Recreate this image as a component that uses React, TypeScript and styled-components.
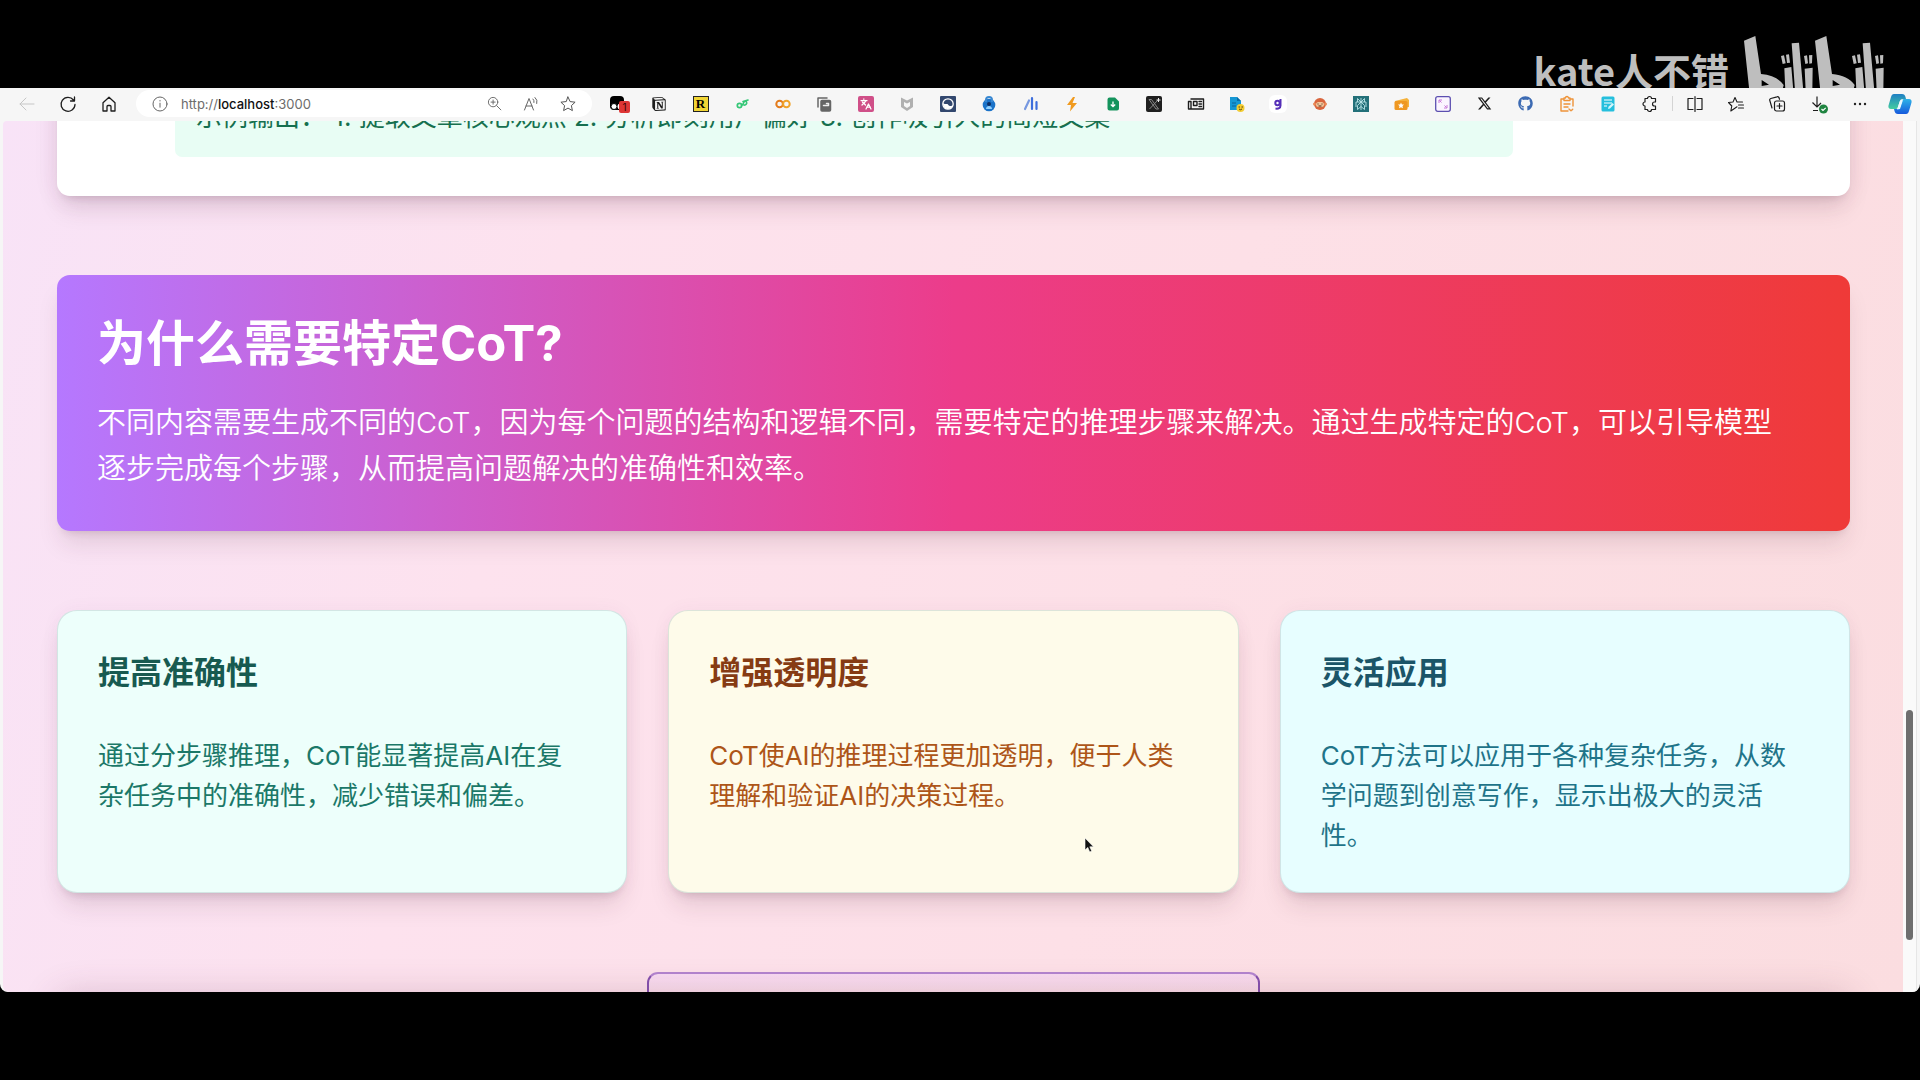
import React from "react";
import styled, { createGlobalStyle } from "styled-components";
import { Languages } from "lucide-react";
import { FaGithub, FaXTwitter } from "react-icons/fa6";
import { SiNotion } from "react-icons/si";

const sans = `Inter, "Noto Sans CJK SC", "Noto Sans", sans-serif`;

const GlobalStyle = createGlobalStyle`
  * { box-sizing: border-box; }
  body { margin: 0; background: #000; font-family: ${sans}; }
  h2, h3, p { margin: 0; }
  button { border: 0; padding: 0; background: none; font: inherit; color: inherit; cursor: pointer; }
`;

const Frame = styled.div`
  display: grid;
  grid-template-rows: 88px minmax(0, 1fr) 88px;
  height: 100vh;
  background: #000;
  overflow: hidden;
`;

const Letterbox = styled.header`
  display: flex;
  justify-content: flex-end;
  align-items: flex-start;
  gap: 15px;
  padding: 36px 36px 0 0;
  color: #bebebe;
  overflow: hidden;
`;

const Uploader = styled.span`
  font: 700 38px/56px "Noto Sans CJK SC", sans-serif;
  margin-top: 6px;
`;

const Browser = styled.div`
  display: flex;
  flex-direction: column;
  min-height: 0;
  background: #f6f6f6;
  border-radius: 0 0 8px 8px;
  overflow: hidden;
`;

const Toolbar = styled.nav`
  display: flex;
  align-items: center;
  flex: none;
  height: 33px;
  padding: 0 8px 2px 19px;
  color: #1d1d1d;
`;

const NavGroup = styled.div`
  display: flex;
  gap: 25px;
  margin-right: 19px;
`;

const IconButton = styled.button<{ $tone?: string }>`
  position: relative;
  display: grid;
  place-items: center;
  width: 16px;
  height: 16px;
  color: ${(p) => p.$tone ?? "#1d1d1d"};
  svg { display: block; overflow: visible; }
`;

const AddressBar = styled.div`
  display: flex;
  align-items: center;
  flex: 0 1 456px;
  height: 27px;
  padding: 0 16px;
  border-radius: 14px;
  background: #fff;
`;

const AddressText = styled.button`
  flex: 1;
  margin-left: 13px;
  text-align: left;
  font-size: 13px;
  line-height: 20px;
  color: #6c6c6c;
  strong { font-weight: 500; color: #111; }
`;

const AddressActions = styled.div`
  display: flex;
  gap: 21px;
`;

const Extensions = styled.div`
  display: flex;
  flex: 1;
  justify-content: space-between;
  margin: 0 14px 0 18px;
`;

const Divider = styled.span`
  width: 1px;
  height: 15px;
  margin-right: 14px;
  background: #d4d4d4;
`;

const MenuGroup = styled.div`
  display: flex;
  gap: 25px;
  margin-right: 21px;
`;

const CopilotButton = styled(IconButton)`
  width: 24px;
  height: 24px;
`;

const Badge = styled.span`
  position: absolute;
  left: 9px;
  top: 5px;
  width: 11px;
  height: 12px;
  border-radius: 2px;
  background: #dd3535;
  color: #3a0505;
  font-size: 10px;
  line-height: 12px;
  text-align: center;
`;

const LetterTile = styled.span`
  width: 16px;
  height: 16px;
  border: 1px solid #222;
  background: #f1d535;
  color: #000;
  font: 700 13px/14px "Liberation Serif", serif;
  text-align: center;
`;

const Viewport = styled.div`
  display: flex;
  flex: 1;
  min-height: 0;
  padding: 0 3px;
`;

const Page = styled.main`
  flex: 1;
  min-width: 0;
  overflow: hidden;
  border-radius: 4px 0 0 6px;
  padding: 0 53px 0 54px;
  background: linear-gradient(105deg, #f8e3f7 0%, #fde2ee 28%, #fde0e7 60%, #fbdde0 100%);
`;

const Content = styled.div`
  display: flex;
  flex-direction: column;
  gap: 79px;
  margin-top: -84px;
`;

const lift = `0 17px 25px -5px rgba(70, 30, 50, 0.13), 0 7px 10px -7px rgba(70, 30, 50, 0.2)`;

const ExampleCard = styled.section`
  padding: 39px 118px;
  border-radius: 13px;
  background: #fff;
  box-shadow: 0 0 25px rgba(120, 50, 110, 0.1), ${lift};
`;

const ExampleOutput = styled.p`
  width: calc(100% - 219px);
  padding: 21px;
  border-radius: 7px;
  background: #e8fdf4;
  color: #16704f;
  font-size: 26px;
  line-height: 39px;
`;

const Hero = styled.section`
  padding: 41px 40px 39px;
  border-radius: 13px;
  background: linear-gradient(to right, #b578ff 0%, #ec3c8a 50%, #ef3a38 100%);
  box-shadow: ${lift};
  color: #fff;
`;

const HeroTitle = styled.h2`
  font-size: 49px;
  font-weight: 700;
  line-height: 56px;
`;

const HeroText = styled.p`
  margin-top: 28px;
  padding-right: 12px;
  font-size: 29px;
  font-weight: 350;
  line-height: 46px;
`;

const CardGrid = styled.div`
  display: grid;
  grid-template-columns: repeat(3, minmax(0, 1fr));
  gap: 41px;
`;

const Card = styled.article<{ $bg: string }>`
  padding: 42px 40px 36px;
  border: 1px solid rgba(180, 200, 200, 0.45);
  border-radius: 20px;
  background: ${(p) => p.$bg};
  box-shadow: 0 0 18px rgba(120, 50, 110, 0.05), ${lift};
`;

const CardTitle = styled.h3<{ $color: string }>`
  color: ${(p) => p.$color};
  font-size: 32px;
  font-weight: 700;
  line-height: 40px;
`;

const CardText = styled.p<{ $color: string }>`
  margin-top: 43px;
  color: ${(p) => p.$color};
  font-size: 26px;
  line-height: 40px;
`;

const Next = styled.section`
  display: flex;
  flex-direction: column;
  align-items: center;
`;

const NextHeading = styled.div`
  width: 613px;
  height: 24px;
  border: 2px solid #8450ae;
  border-top-color: #b384cf;
  border-bottom: 0;
  border-radius: 11px 11px 0 0;
  background: linear-gradient(rgba(245, 214, 248, 0.6), rgba(240, 210, 225, 0.1));
`;

const NextPanel = styled.div`
  align-self: stretch;
  height: 160px;
  border-radius: 13px;
  background: #fff;
  box-shadow: 0 0 36px rgba(110, 50, 80, 0.24);
`;

const ScrollTrack = styled.div`
  display: grid;
  grid-template-rows: 589fr 230fr 52fr;
  flex: none;
  width: 14px;
  padding: 0 3px;
  background: #fafafa;
  border-right: 1px solid #e6e6e6;
  &::before { content: ""; }
`;

const ScrollThumb = styled.div`
  border-radius: 4px;
  background: #6e6e6e;
`;

const Pointer = styled.svg`
  position: fixed;
  left: 1084px;
  top: 837px;
`;

type IconProps = { children: React.ReactNode; size?: number; w?: number };

const Line = ({ children, size = 16, w = 1 }: IconProps) => (
  <svg width={size} height={size} viewBox="0 0 16 16" fill="none" stroke="currentColor" strokeWidth={w} strokeLinecap="round" strokeLinejoin="round" aria-hidden="true">
    {children}
  </svg>
);

const Art = ({ children, size = 16 }: IconProps) => (
  <svg width={size} height={size} viewBox="0 0 16 16" fill="none" aria-hidden="true">
    {children}
  </svg>
);

const BiliHalf = () => (
  <>
    <path fillRule="evenodd" d="M0 14 34 0l17 114c32 3 55 14 68 33l-4 17H16zM53 132v18l22-4z" />
    <path d="m111 60 9-2 5 24-9 2zM126 56l9-1 3 25-9 1zM121 97l21-4 6 71h-24zM143 22l22-2 13 144h-25zM180 60l9-2 3 24-8 2zM195 58l10-1-1 25-8 1zM182 98l24-3-1 69h-20z" />
  </>
);

const BiliLogo = () => (
  <svg width="140" height="55" viewBox="0 0 420 165" fill="currentColor" role="img" aria-label="bilibili">
    <BiliHalf />
    <g transform="translate(213 0)"><BiliHalf /></g>
  </svg>
);

const extensions: { name: string; tone?: string; icon: React.ReactNode }[] = [
  {
    name: "Script manager",
    icon: (
      <>
        <Art>
          <path d="M0 4a4 4 0 0 1 4-4h6a4 4 0 0 1 4 4v8a2 2 0 0 1-2 2H4a4 4 0 0 1-4-4z" fill="#000" />
          <circle cx="4" cy="10.500" r="3" fill="#fff" stroke="#000" />
          <circle cx="10.500" cy="10.500" r="3" fill="#fff" />
        </Art>
        <Badge>1</Badge>
      </>
    ),
  },
  {
    name: "Notion clipper",
    icon: <SiNotion size={14} />,
  },
  { name: "Reader", icon: <LetterTile>R</LetterTile> },
  {
    name: "Link tool",
    tone: "#35c777",
    icon: <Line w={1.7}><circle cx="5.500" cy="9.500" r="2.200" /><path d="M7.500 9.500c2 0 1.500-4 4-4.500M10 9a2.200 2.200 0 0 0 2.500-3M9 5.500 14 4" /></Line>,
  },
  {
    name: "Colab",
    icon: <Art><circle cx="4.600" cy="8" r="3.300" stroke="#e37b1b" strokeWidth="2" /><circle cx="11.400" cy="8" r="3.300" stroke="#f0a32a" strokeWidth="2" /></Art>,
  },
  {
    name: "Tab copy",
    tone: "#666",
    icon: <Line w={1.5}><path d="M2 11V2h9" /><rect x="5" y="4.500" width="9.500" height="10.500" rx="1" fill="#666" /><path d="M7.500 9.500h5v-2h-2" stroke="#eee" /></Line>,
  },
  {
    name: "Translate",
    tone: "#fff",
    icon: <Art><rect width="16" height="16" rx="2" fill="#d04f88" /><Languages x={2} y={2} width={12} height={12} strokeWidth={2.5} /></Art>,
  },
  {
    name: "Web advisor",
    icon: <Art><path d="M2 1.500 8 4.500l6-3v9.500L8 15l-6-4zM5 6v4l3 2 3-2V6L8 7.500z" fill="#b0b0b0" fillRule="evenodd" /></Art>,
  },
  {
    name: "Wave",
    icon: <Art><rect width="16" height="16" rx="1" fill="#32476e" /><circle cx="8" cy="8" r="5.200" stroke="#fff" strokeWidth="1.300" /><path d="M3 7c2 2 4 0 5 1.500S11.500 11 13 9c-.5 3-3 4-5 4S3 11 3 7z" fill="#fff" /></Art>,
  },
  {
    name: "Password vault",
    icon: <Art><circle cx="8" cy="9" r="6.300" fill="#1b73c9" /><path d="M5 6V4a3 3 0 0 1 6 0v2" stroke="#3988d2" strokeWidth="2" /><circle cx="8" cy="8" r="2" fill="#0b2f66" /><path d="M5 13c0-4 6-4 6 0z" fill="#8fd0ff" /></Art>,
  },
  {
    name: "Analytics",
    tone: "#3d6edc",
    icon: <Line w={2.2}><path d="m2 13 4-8.500" stroke="#7798e0" /><path d="M9 2v11M13.500 6v7" /></Line>,
  },
  { name: "Quick actions", icon: <Art><path d="M9 1 3 9h4l-1 6.500L13 7H8.500L11 1z" fill="#f09a1e" /></Art> },
  {
    name: "Save file",
    icon: <Art><path d="M2.500 3.500a2 2 0 0 1 2-2H10l4 4v7a2 2 0 0 1-2 2H4.500a2 2 0 0 1-2-2z" fill="#14935c" /><path d="M8 5.500v5M5.800 8.500 8 10.700l2.200-2.200" stroke="#fff" strokeWidth="1.300" /></Art>,
  },
  {
    name: "X assistant",
    icon: <Art><rect width="16" height="16" rx="2" fill="#1f1f1f" /><path d="M3 3.500h2.500L12.500 13H10zM12 4 3.500 13" stroke="#888" /><path d="M12.500 2v4M10.500 4h4" stroke="#eee" /></Art>,
  },
  {
    name: "News",
    icon: <Line w={1.4}><path d="M3 3h12.500v10H.5V5.500H3v7" /><path d="M5.500 5.500h3.500v4H5.500zM11 5.500h2.500M11 8h2.500M11 10.500h2.500" /></Line>,
  },
  {
    name: "Documents",
    icon: <Art><path d="M1 1h7l4 4v9H1z" fill="#1597d4" /><path d="M8 1v4h4" fill="#0a6ca6" /><path d="M3 7h4M3 10h4" stroke="#0c649b" /><circle cx="11.500" cy="12" r="4" fill="#f3cc31" /><path d="M9.500 11h1.500M12.500 11H14M10 13q1.500 1.500 3 0" stroke="#56430d" /></Art>,
  },
  {
    name: "Quick note",
    icon: <Art><rect x="-1" y="-1" width="18" height="18" rx="6" fill="#fff" /><circle cx="7.500" cy="7" r="2.200" stroke="#5630b8" strokeWidth="2" /><path d="M10.500 3v6.500c0 2.500-2 3.500-5 3" stroke="#5630b8" strokeWidth="2" /></Art>,
  },
  {
    name: "Monkey",
    icon: <Art><circle cx="8" cy="8" r="6" fill="#d9653d" /><circle cx="2.500" cy="8" r="1.500" fill="#e98956" /><circle cx="13.500" cy="8" r="1.500" fill="#e98956" /><rect x="4" y="6" width="8" height="5" rx="2.500" fill="#f2c69b" /><path d="M5.500 8h1M9.500 8h1M6.500 10h3" stroke="#482213" /></Art>,
  },
  {
    name: "Search AI",
    icon: <Art><rect width="16" height="16" fill="#237079" /><path d="M8 2v12M8 6 4.500 2.500V6M8 6l3.500-3.500V6M3 11V6h10v5M8 6l-3.500 3.500V13.500L8 10.500l3.500 3V9.500z" stroke="#b9e3e6" strokeWidth=".9" /></Art>,
  },
  {
    name: "Coupons",
    icon: <Art><path d="m1 5 12-3 2 2v7l-12 2.500z" fill="#f5b23b" /><rect x=".5" y="5" width="13" height="9" rx="1.500" fill="#ef9821" /><path d="m7 6.500.9 1.900 2.100.2-1.500 1.500.4 2.100L7 11.200l-1.900 1 .4-2.100L4 8.600l2.100-.2z" fill="#fff" /></Art>,
  },
  {
    name: "Screen capture",
    icon: <Art><rect x=".7" y=".7" width="14.600" height="14.600" rx="2" fill="#fbf5ff" stroke="#5c4fb0" strokeWidth="1.300" /><path d="M4 7V4h3M4.500 4.500 6.500 6.500M12 9v3H9M11.500 11.500l-2-2" stroke="#c778d8" /></Art>,
  },
  { name: "X", icon: <FaXTwitter size={15} /> },
  { name: "GitHub", tone: "#3d6bb3", icon: <FaGithub size={15} /> },
  {
    name: "Clipboard",
    tone: "#ee9338",
    icon: <Line w={1.4}><path d="M5 3H2v12h7M11 3h3v7M5 4.500h6V2H9.500a1.500 1.500 0 0 0-3 0H5zM5 8h6M5 11h4" /><path d="m10 13 2 1.800 2-1.800" strokeDasharray="1 1" /></Line>,
  },
  {
    name: "Notes",
    icon: <Art><rect x="1.500" y=".5" width="13" height="15" rx="1.500" fill="#25bfdd" /><path d="M4 4h8M4 7h8M4 10h3" stroke="#fff" strokeWidth="1.200" /><path d="m8 13 .5-2.200L12.500 7l1.500 1.500-4 4z" fill="#d4f6fc" /></Art>,
  },
  {
    name: "Extensions",
    icon: <Line w={1.2}><path d="M3 2.500h2.500a2 2 0 0 1 4 0h4V6h-1a2 2 0 0 0 0 4h1v3.500h-4a2 2 0 0 1-4 0H3V10a2 2 0 0 1 0-4z" /></Line>,
  },
];

const menu: { name: string; icon: React.ReactNode }[] = [
  { name: "Split screen", icon: <Line w={1.2}><path d="M6 2.500H1v11h5M10 2.500h5v11h-5M8 .5v15" /></Line> },
  {
    name: "Favorites",
    icon: <Line w={1.1}><path d="M9 10.800 6.500 12.500 2.800 15l1-5L.5 6.500 5 6l2-4.500L9 6h5.500M10.500 9h5M10.500 12h5" /></Line>,
  },
  {
    name: "Collections",
    icon: <Line w={1.2}><path d="M3 12 .8 4.500a1.500 1.500 0 0 1 1-2L8 .8a1.500 1.500 0 0 1 2 1l.5 1.500" /><rect x="5.500" y="5" width="10" height="10" rx="2" /><path d="M10.500 7.500v5M8 10h5" /></Line>,
  },
  {
    name: "Downloads",
    icon: <Art><path d="M7 .5v10M2.500 6.500 7 11l4-4M3 14.500h5" stroke="#1d1d1d" strokeWidth="1.200" /><circle cx="13.500" cy="13" r="4.500" fill="#1f8440" /><path d="m11.500 13 1.500 1.500 2.700-2.700" stroke="#fff" strokeWidth="1.200" /></Art>,
  },
  { name: "More", icon: <Art><g fill="#222"><circle cx="4" cy="8" r="1.200" /><circle cx="9" cy="8" r="1.200" /><circle cx="14" cy="8" r="1.200" /></g></Art> },
];

const cards = [
  { title: "提高准确性", text: "通过分步骤推理，CoT能显著提高AI在复杂任务中的准确性，减少错误和偏差。", bg: "#edfffb", head: "#175a50", body: "#1b7868" },
  { title: "增强透明度", text: "CoT使AI的推理过程更加透明，便于人类理解和验证AI的决策过程。", bg: "#fefbea", head: "#863b13", body: "#ad5518" },
  { title: "灵活应用", text: "CoT方法可以应用于各种复杂任务，从数学问题到创意写作，显示出极大的灵活性。", bg: "#e7feff", head: "#1b5568", body: "#1f7489" },
];

export default function App() {
  return (
    <>
      <GlobalStyle />
      <Frame>
        <Letterbox>
          <Uploader>kate人不错</Uploader>
          <BiliLogo />
        </Letterbox>
        <Browser>
          <Toolbar>
            <NavGroup>
              <IconButton aria-label="Back" $tone="#c6c6c6"><Line><path d="M15 8H1M7 2 1 8l6 6" /></Line></IconButton>
              <IconButton aria-label="Reload"><Line w={1.3}><path d="M13.500 4A7 7 0 1 0 15 8.500M14.500 1v4h-4" /></Line></IconButton>
              <IconButton aria-label="Home"><Line w={1.3}><path d="M2 6.800 8 1.200l6 5.600V15h-4v-4.500a1 1 0 0 0-1-1H7a1 1 0 0 0-1 1V15H2z" /></Line></IconButton>
            </NavGroup>
            <AddressBar>
              <IconButton aria-label="Site information" $tone="#666"><Line><circle cx="8" cy="8" r="7" /><path d="M8 7.200v4M8 4.500v.5" /></Line></IconButton>
              <AddressText aria-label="Address">http://<strong>localhost</strong>:3000</AddressText>
              <AddressActions>
                <IconButton aria-label="Zoom" $tone="#666"><Line size={15}><circle cx="6.500" cy="6.500" r="5" /><path d="m10.300 10.300 4.500 4.500M6.500 4.300v4.400M4.300 6.500h4.400" /></Line></IconButton>
                <IconButton aria-label="Read aloud" $tone="#666"><Line><path d="M1.500 14 6 2.500 10.500 14M3 10h6M10 3q1.500 1.500 1 3.500M12 1.500q3 2.500 1.800 6" /></Line></IconButton>
                <IconButton aria-label="Add to favorites" $tone="#555"><Line><path d="m8 1 2.100 4.600 5 .6-3.700 3.400 1 5L8 12.100l-4.400 2.500 1-5L.9 6.200l5-.6z" /></Line></IconButton>
              </AddressActions>
            </AddressBar>
            <Extensions>
              {extensions.map((e) => (
                <IconButton key={e.name} aria-label={e.name} $tone={e.tone}>{e.icon}</IconButton>
              ))}
            </Extensions>
            <Divider />
            <MenuGroup>
              {menu.map((m) => (
                <IconButton key={m.name} aria-label={m.name}>{m.icon}</IconButton>
              ))}
            </MenuGroup>
            <CopilotButton aria-label="Copilot">
              <svg width="24" height="22" viewBox="0 0 24 22" aria-hidden="true">
                <defs>
                  <linearGradient id="cpA" x1="0" y1="0" x2="0" y2="1"><stop stopColor="#1f7fc4" /><stop offset="1" stopColor="#43cda0" /></linearGradient>
                  <linearGradient id="cpB" x1="0" y1="0" x2="0" y2="1"><stop stopColor="#2fb3e8" /><stop offset="1" stopColor="#1659dc" /></linearGradient>
                </defs>
                <path d="M6 1h8c2 0 3 1 3.500 3l.5 2h-3c-2 0-3 1-3.500 3l-1.500 5c-.6 2-1.500 2-3 2H3c-2 0-3-1.500-2.500-3.500L3 4c.5-2 1.500-3 3-3z" fill="url(#cpA)" />
                <path d="M18 21h-8c-2 0-3-1-3.500-3L6 16h3c2 0 3-1 3.500-3L14 8c.6-2 1.500-2 3-2h4c2 0 3 1.500 2.500 3.500L21 18c-.5 2-1.500 3-3 3z" fill="url(#cpB)" />
                <path d="m12 8 3-1-3 9-3 .5z" fill="#e9f8ff" />
              </svg>
            </CopilotButton>
          </Toolbar>
          <Viewport>
            <Page>
              <Content>
                <ExampleCard>
                  <ExampleOutput>示例输出： 1. 提取文章核心观点 2. 分析即刻用户偏好 3. 创作吸引人的简短文案</ExampleOutput>
                </ExampleCard>
                <Hero>
                  <HeroTitle>为什么需要特定CoT?</HeroTitle>
                  <HeroText>不同内容需要生成不同的CoT，因为每个问题的结构和逻辑不同，需要特定的推理步骤来解决。通过生成特定的CoT，可以引导模型逐步完成每个步骤，从而提高问题解决的准确性和效率。</HeroText>
                </Hero>
                <CardGrid>
                  {cards.map((c) => (
                    <Card key={c.title} $bg={c.bg}>
                      <CardTitle $color={c.head}>{c.title}</CardTitle>
                      <CardText $color={c.body}>{c.text}</CardText>
                    </Card>
                  ))}
                </CardGrid>
                <Next>
                  <NextHeading />
                  <NextPanel />
                </Next>
              </Content>
            </Page>
            <ScrollTrack><ScrollThumb /></ScrollTrack>
          </Viewport>
        </Browser>
      </Frame>
      <Pointer width="11" height="17" viewBox="0 0 11 17" aria-hidden="true">
        <path d="M1 1v12l2.800-2.600L5.700 15l2-.9-1.900-4.300H9.500z" fill="#111" stroke="#fff" strokeWidth=".6" />
      </Pointer>
    </>
  );
}
